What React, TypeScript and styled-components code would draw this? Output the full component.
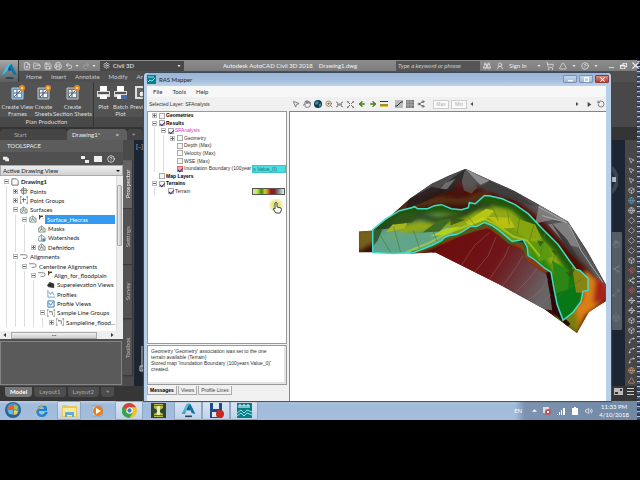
import React from "react";
import styled, { createGlobalStyle, css } from "styled-components";
import {
  Binoculars, CircleHelp, FilePlus, FolderOpen, Save, Printer, Undo2, Redo2, Settings, ShoppingCart,
  MousePointer2, Hand, Globe, ZoomIn, Maximize2, ArrowLeft, ArrowRight, RotateCcw, Volume2,
  UserRound, Triangle, Share2, Magnet, Waypoints, Diamond, Spline, Box as BoxIcon,
} from "lucide-react";

const Global = createGlobalStyle`
  * { box-sizing: border-box; }
  body { margin: 0; background: #000; }
  button, input, select, textarea { font: inherit; color: inherit; margin: 0; padding: 0; border: 0; border-radius: 0; background: none; }
  ul { list-style: none; margin: 0; padding: 0; }
  a { color: inherit; text-decoration: none; }
  svg { display: block; flex: none; }
`;

const ui = 'Lato, "Open Sans", sans-serif';
const classic = '"Liberation Sans", Arial, sans-serif';

const Screen = styled.div`
  height: 100vh; padding: 60px 0; display: flex;
  font: 6px/8px ${ui}; color: #ddd; overflow: hidden; white-space: nowrap;
`;
const Session = styled.div`flex: 1; min-width: 0; display: flex; flex-direction: column;`;
const Desktop = styled.div`position: relative; flex: 1; min-height: 0; display: flex;`;
const Cad = styled.main`flex: 1; min-width: 0; display: flex; flex-direction: column; background: #1c2531;`;
const CadHead = styled.header`display: flex; background: #494949;`;
const AppButton = styled.button`
  width: 19px; height: 22px; background: linear-gradient(#a8a8a8, #5d5d5d); border-right: 1px solid #333;
  display: grid; place-items: center;
`;
const HeadRows = styled.div`flex: 1; min-width: 0;`;
const TitleBar = styled.div`
  height: 11px; display: flex; align-items: center; background: linear-gradient(#8c8c8c, #7d7d7d); color: #eee;
`;
const QuickBar = styled.div`
  width: 81px; height: 11px; display: flex; align-items: center; justify-content: space-between; padding: 0 4px;
`;
const IconButton = styled.button`display: grid; place-items: center; color: inherit;`;
const Workspace = styled.button`
  width: 84px; height: 10px; display: flex; align-items: center; gap: 3px; padding: 0 3px; background: #484848;
  span { flex: 1; text-align: left; }
`;
const DocTitle = styled.div`flex: 1; text-align: center; color: #f4f4f4;`;
const Search = styled.input`
  width: 84px; height: 10px; padding: 0 2px; background: #555; font-style: italic;
  &::placeholder { color: #ccc; opacity: 1; }
`;
const HeadTools = styled.div`width: 157px; display: flex; align-items: center; gap: 5px; padding: 0 3px;`;
const Grow = styled.span`flex: 1;`;
const MenuRow = styled.nav`height: 11px; display: flex; align-items: center; gap: 9px; padding-left: 7px; color: #ccc; background: #505050;`;
const Ribbon = styled.section`height: 46px; display: flex; background: #484848; border-bottom: 1px solid #333;`;
const RibbonGroup = styled.div`display: flex; flex-direction: column; border-right: 1px solid #343434; background: #535353;`;
const RibbonTools = styled.div`flex: 1; display: flex; align-items: flex-start; padding: 3px 2px 0;`;
const GroupName = styled.div`height: 11px; line-height: 9px; text-align: center; background: #484848; color: #ddd;`;
const BigButton = styled.button<{ $w: number }>`
  width: ${p => p.$w}px; display: flex; flex-direction: column; align-items: center; gap: 3px;
  line-height: 7px; text-align: center; color: #ddd; white-space: pre;
`;
const FileTabs = styled.div`height: 12px; display: flex; align-items: flex-end; background: #343434;`;
const FileTab = styled.button<{ $w: number; $on?: boolean; $inset?: number }>`
  width: ${p => p.$w}px; height: 11px; display: flex; align-items: center; justify-content: space-between; padding: 0 8px 0 ${p => p.$inset ?? 5}px;
  background: ${p => (p.$on ? "#606060" : "#454545")}; color: ${p => (p.$on ? "#eee" : "#aaa")};
  border-radius: 4px 4px 0 0;
`;
const Work = styled.div`flex: 1; min-height: 0; display: flex;`;
const Palette = styled.aside`width: 134px; display: flex; background: #505050;`;
const PaletteMain = styled.div`width: 123px; display: flex; flex-direction: column;`;
const PaletteTitle = styled.div`height: 12px; line-height: 12px; padding-left: 7px; color: #eee; background: #5c5c5c;`;
const PaletteTools = styled.div`height: 13px; display: flex; align-items: center; gap: 5px; padding: 0 3px;`;
const ViewSelect = styled.select`
  height: 11px; appearance: none; padding: 0 2px; background: linear-gradient(#eee, #d2d2d2); color: #222; border: 1px solid #aaa;
`;
const SelectWrap = styled.div`
  position: relative; display: grid;
  &::after { content: ""; position: absolute; right: 3px; top: 5px; border: 2px solid transparent; border-top-color: #111; }
`;
const TreeFrame = styled.div`height: 155px; background: #fff; display: flex; color: #222;`;
const CadTree = styled.ul`width: 116px; padding: 1px 1px 4px 0; display: grid; grid-auto-rows: 1fr;`;
const CadItem = styled.li<{ $d: number; $bold?: boolean; $on?: boolean }>`
  display: flex; align-items: center; gap: 2px; padding-left: ${p => p.$d * 9 + 4}px; min-height: 0;
  background: repeating-linear-gradient(90deg, transparent 0 6px, #ddd 6px 7px, transparent 7px 9px) 0 0 / ${p => p.$d * 9}px 100% no-repeat;
  font-weight: ${p => (p.$bold ? 700 : 400)};
  span { flex: ${p => (p.$on ? 1 : "none")}; line-height: 9px; ${p => p.$on && css`background: #3399f3; color: #fff; padding-left: 2px;`} }
`;
const Expander = styled.button<{ $hide?: boolean }>`
  width: 5px; height: 5px; border: ${p => (p.$hide ? 0 : 1)}px solid #bbb; flex: none; color: #444; display: grid; place-items: center;
`;
const VBar = styled.div`
  width: 7px; background: #eee; padding: 9px 1px 85px 0; display: flex; border-left: 1px solid #ddd;
  i { flex: 1; background: linear-gradient(90deg, #eee, #c5c5c5); border: 1px solid #aaa; border-radius: 1px; }
`;
const HBar = styled.div`
  height: 8px; background: #eee; display: flex; align-items: center; justify-content: space-between; padding: 0 9px 0 3px; color: #333;
  i { width: 86px; height: 7px; margin-right: 9px; background: linear-gradient(#f1f1f1, #ccc); border: 1px solid #aaa; font-style: normal; line-height: 4px; text-align: center; }
`;
const Details = styled.div`flex: 1; margin: 2px 1px 1px 0; border: 1px solid #858585; background: #5a5a5a;`;
const SideTabs = styled.div`flex: 1; padding: 20px 1px 10px 0; display: grid; grid-template-rows: 49fr 56fr 54fr 56fr; background: #4a4a4a;`;
const SideTab = styled.button<{ $on?: boolean }>`
  writing-mode: vertical-rl; transform: rotate(180deg); background: ${p => (p.$on ? "#636363" : "#525252")};
  color: ${p => (p.$on ? "#eee" : "#bbb")}; border-top: 1px solid #333; border-left: 1px solid #333; line-height: 8px; text-align: center;
`;
const LayoutTabs = styled.div`height: 15px; display: flex; align-items: flex-start; padding: 1px 3px 0 5px; gap: 2px; background: #363636;`;
const LayoutTab = styled.button<{ $on?: boolean }>`
  height: 10px; padding: 0 5px; border-radius: 0 0 4px 4px; background: ${p => (p.$on ? "#777" : "#4d4d4d")};
  color: ${p => (p.$on ? "#fff" : "#aaa")}; font-weight: ${p => (p.$on ? 700 : 400)};
`;
const Viewport = styled.div`flex: 1; display: flex; min-width: 0;`;
const Model = styled.div`
  flex: 1; min-width: 0; display: flex; flex-direction: column; justify-content: space-between; padding: 3px 2px 14px; color: #ccc;
`;
const NavColumn = styled.div`width: 15px; padding: 26px 1px 56px 0; display: flex; flex-direction: column; justify-content: space-between;`;
const NavBar = styled.div`
  height: 98px; width: 12px; background: #565d65; border-radius: 1px; color: #79818a;
  display: flex; flex-direction: column; align-items: center; justify-content: space-around;
`;
const ToolColumn = styled.div`
  width: 12px; background: #474747; color: #d5d5d5; display: flex; flex-direction: column; align-items: center; justify-content: space-between; padding: 17px 0 2px;
`;
const Noise = styled.div`
  width: 3px; background: repeating-linear-gradient(#333d59 0 1px, #b8c2d8 1px 2px, #46557c 2px 4px, #28334c 4px 5px);
`;

const Window = styled.section`
  position: absolute; left: 144px; right: 26px; top: 13px; bottom: 0; display: flex; flex-direction: column;
  background: #f0f0f0; border: solid #b7cfe9; border-width: 0 5px 0 3px; border-radius: 3px 3px 0 0; color: #333;
  font: 5px/7px ${classic}; box-shadow: 0 0 1px 1px #3c4c5d;
`;
const WinTitle = styled.header`
  height: 13px; display: flex; align-items: center; gap: 3px; background: linear-gradient(#9ab5d6, #a4bddc 50%, #bdd2ea);
  margin: 0 -3px 0 -1px; padding-left: 1px; border-radius: 3px 3px 0 0; font: 6px/8px ${ui}; color: #222;
`;
const WinButtons = styled.div`display: flex; gap: 2px; align-self: flex-start; margin-top: 2px;`;
const WinButton = styled.button<{ $close?: boolean }>`
  width: 14px; height: 8px; border: 1px solid ${p => (p.$close ? "#873c35" : "#7b93b3")}; border-radius: 1px; display: grid; place-items: center;
  color: #fff; background: ${p => (p.$close ? "linear-gradient(#dd8c80, #bd3c2b)" : "linear-gradient(#c4d6eb, #9fb9d8)")};
`;
const WinMenu = styled.nav`height: 11px; display: flex; align-items: center; gap: 10px; padding: 0 6px; background: #f7f7f7; font: 6px/8px ${ui};`;
const WinTools = styled.div`height: 14px; display: flex; align-items: center;`;
const Selected = styled.div`width: 143px; padding-left: 2px;`;
const MapTools = styled.div`flex: 1; display: flex; align-items: center; color: #4a4a4a;`;
const MapTool = styled.button<{ $c?: string; $gap?: boolean }>`
  width: 11px; height: 10px; margin-left: ${p => (p.$gap ? 4 : 0)}px; display: grid; place-items: center; color: ${p => p.$c || "inherit"};
`;
const RangeButton = styled.button<{ $first?: boolean }>`
  width: 16px; height: 9px; margin-left: ${p => (p.$first ? 7 : 2)}px; border: 1px solid #ccc; background: #fafafa; color: #aaa;
`;
const Track = styled.div`flex: 1; display: flex; justify-content: space-between; padding: 0 5px 0 3px;`;
const WinBody = styled.div`flex: 1; min-height: 0; display: flex; gap: 2px;`;
const Side = styled.div`width: 140px; display: flex; flex-direction: column;`;
const LayerFrame = styled.div`flex: 1; min-height: 0; background: #fff; border: 1px solid #999;`;
const LayerTree = styled.ul`height: 83px; display: grid; grid-auto-rows: 1fr;`;
const LayerItem = styled.li<{ $d: number; $tone?: string }>`
  display: flex; align-items: center; padding-left: ${p => p.$d * 9 + 4}px; gap: 2px; min-height: 0;
  background: repeating-linear-gradient(90deg, transparent 0 6px, #ddd 6px 7px, transparent 7px 9px) 0 0 / ${p => p.$d * 9}px 100% no-repeat;
  font-weight: ${p => (p.$tone === "bold" ? 700 : 400)}; color: ${p => (p.$tone === "pink" ? "#d32ed0" : p.$tone === "bold" ? "#000" : "#333")};
  label { display: flex; align-items: center; gap: 1px; }
  mark { background: #4bdde0; color: #256d76; width: 34px; border: 1px solid #37c6cf; line-height: 6px; margin-right: -4px; }
`;
const Check = styled.input<{ $red?: boolean }>`
  appearance: none; width: 6px; height: 6px; border: 1px solid ${p => (p.$red ? "#dc6666" : "#aaa")}; background: ${p => (p.$red ? "#f3a9a9" : "#f6f6f6")};
  display: grid; place-items: center;
  &:checked::after { content: ""; width: 2px; height: 4px; border: solid #44347c; border-width: 0 1px 1px 0; transform: rotate(45deg); }
`;
const Ramp = styled.i`
  width: 33px; height: 7px; margin: 0 1px 0 auto; border: 1px solid #555;
  background: linear-gradient(90deg, #c7eccb, #c9e82e 14%, #2c8d15 28%, #d4d322 38%, #e0781b 48%, #921512 58%, #8c2224 70%, #777 80%, #eee);
`;
const Messages = styled.textarea`
  height: 40px; margin-top: 1px; padding: 2px 3px; border: 1px solid #999; box-shadow: inset -2px -2px #e4e4e4; background: #fff; line-height: 6px; resize: none; overflow: hidden; color: #333;
`;
const MessageTabs = styled.div`height: 16px; display: flex; padding-top: 1px; gap: 1px;`;
const MessageTab = styled.button<{ $on?: boolean }>`
  height: 9px; padding: 0 2px; border: 1px solid #aaa; border-top: 0; font-weight: ${p => (p.$on ? 700 : 400)}; color: ${p => (p.$on ? "#000" : "#444")};
`;
const MapPane = styled.div`
  flex: 1; min-width: 0; background: #fff; border: solid #858585; border-width: 1px 0 0 1px; overflow: hidden;
  svg { width: 100%; height: 100%; }
`;
const Pointer = styled.div`
  position: absolute; left: 121px; top: 126px; width: 18px; height: 18px; color: #333; display: grid; place-items: center;
  background: radial-gradient(circle at 8px 6px, #d8d655 0, #e9e88a 4px, transparent 8px);
`;

const Taskbar = styled.footer`height: 19px; display: flex; background: linear-gradient(#b7cde8, #a0bada 20%, #a5bedc);`;
const Task = styled.button<{ $w: number; $on?: boolean }>`
  width: ${p => p.$w}px; display: grid; place-items: center;
  ${p => p.$on && css`background: linear-gradient(#d9e5f3, #bfd2e8); border: 1px solid #8ea7c4; border-radius: 1px;`}
`;
const Tray = styled.div`
  margin-left: auto; width: 122px; display: flex; align-items: center; justify-content: flex-end; gap: 6px; padding-right: 8px; color: #fff;
  background: linear-gradient(90deg, transparent, #7c92ae 10px, #7189a5);
`;
const Lang = styled.span`margin-right: 4px;`;
const Clock = styled.time`text-align: center; white-space: pre-line;`;

const Glyph = ({ d, size = 7, fill = "currentColor" }: { d: string; size?: number; fill?: string }) => (
  <svg width={size} height={size} viewBox="0 0 8 8"><path d={d} fill={fill} /></svg>
);
const Down = () => <Glyph size={4} d="M1 2h6L4 6z" />;
const ALogo = ({ size = 17 }: { size?: number }) => (
  <svg width={size} height={size} viewBox="0 0 18 18">
    <path d="M1 13 7 1h4l6 12-4-1-1-3H6l-1 4z" fill="#2492bb" /><path d="M7 1h4L6 9l-5 4z" fill="#58b9dc" /><path d="M9 3 7 8h4z" fill="#1b526c" />
    <path d="M11 1l6 12-4-1-4-9z" fill="#1673a0" /><path d="M5 15h8v2H5z" fill="#294556" />
  </svg>
);
const Sheet = ({ tone }: { tone: string }) => (
  <svg width="15" height="15" viewBox="0 0 15 15">
    <path d="M2 3h11v11H2z" fill={tone} stroke="#b9cbd8" /><path d="M4 5h7v7H4z" fill="#eef3f6" />
    <path d="M4 8h7M7 5v7M4 12l7-7" stroke="#4e6178" fill="none" /><circle cx="12" cy="3" r="3" fill="#e58a28" /><circle cx="12" cy="3" r="1" fill="#fff1b8" />
  </svg>
);
const Plotter = ({ blue }: { blue?: boolean }) => (
  <svg width="15" height="15" viewBox="0 0 15 15">
    <path d="M4 1h7v5H4z" fill="#fff" /><path d="M1 6h13v6H1z" fill="#d7d7d7" /><path d="M2 7h11v2H2z" fill="#555" /><path d="M4 10h7v4H4z" fill="#f8f8f8" />
    {blue && <path d="M8 10h6v4H8z" fill="#466da4" />}
  </svg>
);
const Preview = () => (
  <svg width="15" height="15" viewBox="0 0 15 15"><path d="M2 1h11v13H2z" fill="#ddd" /><path d="M4 3h7v9H4z" fill="#666" /><circle cx="9" cy="9" r="3" fill="#eee" stroke="#555" /></svg>
);
const NodeIcon = ({ kind }: { kind: string }) => {
  const shapes: Record<string, React.ReactNode> = {
    doc: <path d="M1 1h5l2 2v5H1z" fill="#fff" stroke="#666" />,
    points: <path d="M4 0v9M0 4h9M2 2h5v5H2z" fill="none" stroke="#777" />,
    group: <path d="M2 1H0v7h2M7 1h2v7H7M4 2v5M2 4h5" fill="none" stroke="#666" />,
    surface: <path d="M0 4 4 1l4 3v4H1zM0 4l4 1 4-1M4 5 1 8M4 5l4 3M4 1v4" fill="#edf4ee" stroke="#8a958e" />,
    water: <><path d="M0 4 4 1l4 3v4H1zM4 1v7" fill="#edf4ee" stroke="#8a958e" /><path d="M5 5h3v3H5z" fill="#4487bd" /></>,
    align: <path d="M0 2h6q2 0 2 2t-2 2H3" fill="none" stroke="#777" />,
    super: <path d="M0 5 3 1l5 2v5l-6-1z" fill="#333" />,
    profile: <path d="M1 0v8h8M2 2l2 3 2-3 2 4" fill="none" stroke="#6d9cc0" />,
    pview: <path d="M1 1h7v7H1zM2 3l2 3 3-4" fill="#e8f3fc" stroke="#3677aa" />,
    sample: <path d="M2 1H0v7h2M7 1h2v7H7M3 3h3v4M3 2v2" fill="none" stroke="#777" />,
  };
  return <svg width="8" height="8" viewBox="0 0 9 9">{shapes[kind]}</svg>;
};
const Flag = () => <svg width="4" height="8" viewBox="0 0 4 8"><path d="M0 0h4v2H2L0 5z" fill="#4a4520" /><path d="M1 0h3v1H1z" fill="#e0b52e" /></svg>;
const cadRows: [string, number, string, string][] = [
  ["Drawing1", 0, "-", "doc"], ["Points", 1, "+", "points"], ["Point Groups", 1, "+", "group"], ["Surfaces", 1, "-", "surface"],
  ["Surface_Hecras", 2, "-", "surface"], ["Masks", 3, "", "surface"], ["Watersheds", 3, "", "water"], ["Definition", 3, "+", "surface"],
  ["Alignments", 1, "-", "align"], ["Centerline Alignments", 2, "-", "align"], ["Align_for_floodplain", 3, "-", "align"],
  ["Superelevation Views", 4, "", "super"], ["Profiles", 4, "", "profile"], ["Profile Views", 4, "", "pview"],
  ["Sample Line Groups", 4, "-", "sample"], ["Sampleline_flood...", 5, "+", "sample"],
];
const flagged = ["Surface_Hecras", "Align_for_floodplain"];
const layers: [string, number, string, boolean, string][] = [
  ["Geometries", 0, "+", false, "bold"], ["Results", 0, "-", true, "bold"], ["SFAnalysis", 1, "-", true, "pink"], ["Geometry", 2, "+", false, ""],
  ["Depth (Max)", 2, "", false, ""], ["Velocity (Max)", 2, "", false, ""], ["WSE (Max)", 2, "", false, ""],
  ["Inundation Boundary (100year", 2, "", true, "red"], ["Map Layers", 0, "", false, "bold"], ["Terrains", 0, "-", true, "bold"], ["Terrain", 1, "", true, ""],
];
const Sign = ({ s }: { s: string }) => (
  <Expander $hide={!s} aria-label={s === "+" ? "Expand" : "Collapse"}>
    {s && <svg width="3" height="3" viewBox="0 0 3 3"><path d={s === "+" ? "M0 1h3v1H0zM1 0h1v3H1z" : "M0 1h3v1H0z"} fill="#666" /></svg>}
  </Expander>
);

const outline = "M359 231 373 230 390 216 410 198 432 183 449 175 466 168 490 179 515 190 540 204 569 221 588 250 607 284V301L590 312 578 333 563 322 545 309 500 284 458 263 436 252 415 253 373 252 359 252Z";
const flood = "M373 252V229L385 219 400 210 412 207 415 206 418 208 428 208 435 205 442 204 452 208 462 209 469 207 470 202 476 203 485 195 490 195 503 198 516 204 529 213 543 228 559 244 571 261 577 269 581 270 589 278V290L584 291 582 301 574 312 564 320 558 304 555 289 552 272 546 268 535 259 529 255 528 247 524 239 513 241 500 230 493 225 485 222 477 226 471 226 463 231 457 234 450 235 445 237 442 240 432 245 414 252 394 253Z";
const Terrain = () => (
  <svg viewBox="290 111 316 290" preserveAspectRatio="xMinYMin meet" role="img" aria-label="Terrain with inundation boundary">
    <defs>
      <clipPath id="land"><path d={outline} /></clipPath>
      <clipPath id="wet"><path d={flood} /></clipPath>
      <filter id="soft"><feGaussianBlur stdDeviation="2" /></filter>
      <linearGradient id="plain" x1="440" y1="240" x2="540" y2="300" gradientUnits="userSpaceOnUse">
        <stop stopColor="#6d0c0d" /><stop offset=".5" stopColor="#6f1518" /><stop offset=".75" stopColor="#6a3a3e" /><stop offset="1" stopColor="#686466" />
      </linearGradient>
      <linearGradient id="valley" x1="373" y1="240" x2="575" y2="290" gradientUnits="userSpaceOnUse">
        <stop stopColor="#58967b" /><stop offset=".24" stopColor="#5f9a5a" /><stop offset=".38" stopColor="#7d9a1c" /><stop offset=".68" stopColor="#6f9a12" /><stop offset=".82" stopColor="#2c8710" /><stop offset="1" stopColor="#127510" />
      </linearGradient>
    </defs>
    <g clipPath="url(#land)">
      <path d={outline} fill="#3b100b" />
      <g filter="url(#soft)">
        <path d="M405 200 430 182 466 166 492 178 540 202 570 219 612 285 608 296 588 272 563 249 543 222 518 203 497 191 476 185 450 190Z" fill="#555" />
        <path d="M400 210 430 196 455 188 480 194 514 200 540 220 574 257 604 289" fill="none" stroke="#540905" strokeWidth="8" />
        <path d="M380 222 410 205 440 200 470 200 490 192" fill="none" stroke="#553216" strokeWidth="7" />
        <path d="M357 229 375 228 378 240 357 252Z" fill="#77611d" />
        <path d="M390 255 415 252 441 241 470 230 490 225 510 241 523 246 530 260 549 272" fill="none" stroke="#b34916" strokeWidth="5" />
        <path d="M586 270 600 282 606 300 586 316 578 334 561 320 582 300Z" fill="#db7e12" />
        <path d="M597 275 608 285V302L594 303Z" fill="#a72416" />
        <path d="M555 316 575 305 580 322 578 334Z" fill="#777f10" />
      </g>
      <path d="M432 252 446 244 456 238 476 231 489 228 500 236 512 246 524 250 528 261 549 275 553 310 545 309Z" fill="url(#plain)" />
      <path d="M549 272 556 311 570 325" fill="none" stroke="#2c0808" strokeWidth="4" />
      <g stroke="#a87575" strokeWidth="1" opacity=".4" fill="none">
        <path d="M462 265 475 245 490 232M475 272 489 255 497 236M490 279 505 257 510 246M503 286 518 265 524 255M516 293 531 277 538 268M529 300 542 290 549 278M540 306 552 294" />
      </g>
      <g opacity=".8">
        <path d="M466 168 460 188 445 193 430 197 439 187Z" fill="#252525" /><path d="M466 168 478 187 472 193 461 188Z" fill="#5c5555" />
        <path d="M466 168 490 180 481 184 475 178Z" fill="#9a9a9a" /><path d="M490 180 520 194 536 206 510 198 482 186Z" fill="#3b3b3b" />
        <path d="M432 183 450 177 440 187 428 196Z" fill="#4c4c4c" /><path d="M446 182 456 178 448 188 434 194Z" fill="#777" />
        <path d="M540 204 569 221 553 219 536 223Z" fill="#888" />
        <path d="M569 221 580 247 567 244 549 224Z" fill="#8a8a8a" /><path d="M569 221 607 284 596 276 580 248Z" fill="#5a5a5a" />
        <path d="M552 222 568 239 580 259 599 279 570 251Z" fill="#373737" />
        <path d="M570 224 582 250 604 282M539 206 568 222 543 215" stroke="#bbb" fill="none" />
        <path d="M410 198 432 186 448 189 428 200 406 208Z" fill="#241b1b" />
        <path d="M455 182 462 179 466 196 456 198Z" fill="#4b1414" />
      </g>
      <g clipPath="url(#wet)">
        <path d={flood} fill="url(#valley)" />
        <path d="M373 229 400 210 441 205 469 208 485 196 516 204 545 230 571 261 589 278" stroke="#20570b" strokeWidth="14" fill="none" filter="url(#soft)" />
        <path d="M386 238 411 226 436 225 463 223 484 211 507 214 526 231 549 252 563 275" stroke="#93a814" strokeWidth="10" fill="none" filter="url(#soft)" />
        <path d="M375 232 401 221 420 215 438 220 461 215 474 207 492 204" stroke="#28401a" strokeWidth="7" fill="none" opacity=".85" filter="url(#soft)" />
        <path d="M373 230 390 228 410 233 437 231 449 225 455 234 432 244 412 252 373 252Z" fill="#62a68f" opacity=".85" />
        <path d="M373 230 383 228 378 240 373 246Z" fill="#355b30" />
        <path d="M386 232 393 224 408 222 405 228Z" fill="#a3b521" /><path d="M423 232 440 219 452 218 440 231Z" fill="#3f6a26" />
        <path d="M430 236 446 228 462 226 446 234Z" fill="#b2d022" />
        <path d="M466 222 476 215 487 208 495 210 486 219 472 225Z" fill="#b5c616" /><path d="M487 216 510 217 516 227 504 228Z" fill="#bbbf10" />
        <path d="M512 216 536 224 543 239 527 237Z" fill="#87a50e" /><path d="M529 240 547 243 554 256 540 261Z" fill="#5a9a10" />
        <path d="M553 260 570 270 569 295 557 293Z" fill="#2b8616" /><path d="M557 293 583 284 576 309 564 319Z" fill="#087718" />
        <path d="M573 266 590 275 590 293 577 292Z" fill="#878414" />
        <path d="M402 214 421 214 412 222 395 224ZM452 217 466 219 451 225ZM538 240 545 241 541 246ZM552 250 560 250 557 255ZM567 272 577 267 571 277Z" fill="#315413" opacity=".8" />
        <path d="M406 252 430 242 445 234 463 227 484 218 497 224 514 236 528 240 541 256" fill="none" stroke="#c4da24" strokeWidth="2" opacity=".6" />
        <path d="M380 234 391 252M394 226 401 252M414 230 420 248M432 226 438 242M468 215 476 225M492 204 499 220M508 208 510 224M521 213 518 233M535 224 530 241M546 232 541 257M558 249 551 268M574 266 558 287M582 279 558 297" stroke="#4b751c" fill="none" opacity=".55" />
      </g>
      <path d="M410 253 432 246 444 240 450 237 463 233 478 228 487 224 496 229 510 242 523 243 529 257" fill="none" stroke="#27701e" strokeWidth="2" />
    </g>
    <path d={flood} fill="none" stroke="#42ddca" strokeWidth="1.5" />
  </svg>
);

export default function App() {
  return (
    <>
      <Global />
      <Screen>
        <Session>
          <Desktop>
            <Cad>
              <CadHead>
                <AppButton aria-label="Application menu"><ALogo /></AppButton>
                <HeadRows>
                  <TitleBar>
                    <QuickBar>
                      {[FilePlus, FolderOpen, Save, Printer, Undo2].map((I, i) => <IconButton key={i} aria-label="Quick access"><I size={8} /></IconButton>)}
                      <Down /><IconButton aria-label="Redo"><Redo2 size={8} color="#aaa" /></IconButton><Down />
                    </QuickBar>
                    <Workspace><Settings size={7} /><span>Civil 3D</span><Down /></Workspace>
                    <DocTitle>Autodesk AutoCAD Civil 3D 2018 &nbsp; &nbsp;Drawing1.dwg</DocTitle>
                    <Search aria-label="Search" placeholder="Type a keyword or phrase" />
                    <HeadTools>
                      <Binoculars size={8} /><UserRound size={8} /><span>Sign In</span><Grow /><Down /><ShoppingCart size={8} /><Triangle size={8} /><Down />
                      <CircleHelp size={8} /><Down /><Grow /><IconButton aria-label="Minimize"><Glyph d="M1 6h6v1H1z" /></IconButton>
                      <IconButton aria-label="Restore"><Glyph d="M3 1h5v5H6v2H0V3h3zM4 3h2v2h1V2H4zM1 5v2h4V5z" /></IconButton>
                      <IconButton aria-label="Close"><Glyph d="M1 0l3 3 3-3 1 1-3 3 3 3-1 1-3-3-3 3-1-1 3-3-3-3z" /></IconButton>
                    </HeadTools>
                  </TitleBar>
                  <MenuRow>{["Home", "Insert", "Annotate", "Modify", "Analyze"].map(t => <a href="#" key={t}>{t}</a>)}</MenuRow>
                </HeadRows>
              </CadHead>
              <Ribbon>
                <RibbonGroup>
                  <RibbonTools>
                    <BigButton $w={31}><Sheet tone="#4b9ed9" />{"Create View\nFrames"}</BigButton>
                    <BigButton $w={21}><Sheet tone="#777" />{"Create\nSheets"}</BigButton>
                    <BigButton $w={37}><Sheet tone="#777" />{"Create\nSection Sheets"}</BigButton>
                  </RibbonTools>
                  <GroupName>Plan Production</GroupName>
                </RibbonGroup>
                <RibbonGroup>
                  <RibbonTools>
                    <BigButton $w={15}><Plotter />Plot</BigButton>
                    <BigButton $w={19}><Plotter blue />{"Batch\nPlot"}</BigButton>
                    <BigButton $w={21}><Preview />Preview</BigButton>
                  </RibbonTools>
                  <GroupName />
                </RibbonGroup>
              </Ribbon>
              <FileTabs>
                <FileTab $w={67} $inset={14}>Start</FileTab>
                <FileTab $w={60} $on>Drawing1*<span>×</span></FileTab>
                <FileTab $w={16} aria-label="New tab">+</FileTab>
              </FileTabs>
              <Work>
                <Palette>
                  <PaletteMain>
                    <PaletteTitle>TOOLSPACE</PaletteTitle>
                    <PaletteTools>
                      <Glyph size={6} fill="#eee" d="M0 1h6v2h2v4H3V5H0z" /><Grow />
                      <Glyph size={8} fill="#eee" d="M0 1h4v3H0zM4 5h4v3H4z" /><Glyph size={8} fill="#eee" d="M0 1h8v6H0z" /><CircleHelp size={8} color="#fff" />
                      <span />
                    </PaletteTools>
                    <SelectWrap><ViewSelect aria-label="View"><option>Active Drawing View</option></ViewSelect></SelectWrap>
                    <TreeFrame>
                      <CadTree>
                        {cadRows.map(([t, d, s, k]) => (
                          <CadItem key={t} $d={d} $bold={t === "Drawing1"} $on={t === "Surface_Hecras"}>
                            <Sign s={s} /><NodeIcon kind={k} />{flagged.includes(t) && <Flag />}<span>{t}</span>
                          </CadItem>
                        ))}
                      </CadTree>
                      <VBar><i /></VBar>
                    </TreeFrame>
                    <HBar><Glyph size={4} d="M6 0v8L1 4z" /><i>···</i><Glyph size={4} d="M2 0v8l5-4z" /></HBar>
                    <Details />
                  </PaletteMain>
                  <SideTabs>{["Prospector", "Settings", "Survey", "Toolbox"].map((t, i) => <SideTab key={t} $on={i === 0}>{t}</SideTab>)}</SideTabs>
                </Palette>
                <Viewport>
                  <Model>
                    <span>[–]</span>
                    <svg width="12" height="26" viewBox="0 0 12 26"><path d="M6 0v24h6M4 20h5v5H4z" fill="none" stroke="#ccc" /></svg>
                  </Model>
                  <NavColumn>
                    <svg width="8" height="28" viewBox="0 0 8 28"><path d="M1 1q12 13 0 26" fill="none" stroke="#3b4651" strokeWidth="4" /><path d="M2 11h4v5H2z" fill="#b4bac0" /></svg>
                    <NavBar><Hand size={8} /><Share2 size={8} /><Maximize2 size={8} /><BoxIcon size={8} /></NavBar>
                  </NavColumn>
                  <ToolColumn>
                    {[MousePointer2, MousePointer2, MousePointer2, BoxIcon, Globe, Globe, Diamond, Diamond, Diamond, Diamond, BoxIcon, Magnet, Share2, Magnet, Waypoints, Waypoints, BoxIcon, BoxIcon, Spline, Spline, Spline, Globe, Triangle].map((I, i) => (
                      <IconButton key={i} aria-label={`Tool ${i + 1}`}><I size={7} color={i === 11 || i === 13 ? "#c66" : i === 4 ? "#6ac" : i > 20 ? "#e0a878" : "#ddd"} /></IconButton>
                    ))}
                  </ToolColumn>
                </Viewport>
              </Work>
              <LayoutTabs>
                <LayoutTab $on>Model</LayoutTab><LayoutTab>Layout1</LayoutTab><LayoutTab>Layout2</LayoutTab><LayoutTab>+</LayoutTab>
                <Grow />
                <svg width="20" height="10" viewBox="0 0 20 10"><path d="M0 1h9v7H0z" fill="#bbb" /><path d="M1 5h3v2H1zM6 2h2v2H6z" fill="#333" /><path d="M13 1h7v1h-7zM13 4h7v1h-7zM13 7h7v1h-7z" fill="#ccc" /></svg>
              </LayoutTabs>
            </Cad>

            <Window>
              <WinTitle>
                <svg width="9" height="9" viewBox="0 0 9 9"><path d="M0 0h9v9H0z" fill="#087f8d" /><path d="M1 2h6M1 7l2-2 2 1 3-3" stroke="#8de7e5" fill="none" /></svg>
                <span>RAS Mapper</span><Grow />
                <WinButtons>
                  <WinButton aria-label="Minimize"><Glyph size={5} d="M0 5h8v2H0z" /></WinButton>
                  <WinButton aria-label="Maximize"><Glyph size={5} d="M0 0h8v8H0zM2 2v4h4V2z" /></WinButton>
                  <WinButton $close aria-label="Close"><Glyph size={5} d="M1 0l3 3 3-3 1 1-3 3 3 3-1 1-3-3-3 3-1-1 3-3-3-3z" /></WinButton>
                </WinButtons>
              </WinTitle>
              <WinMenu><a href="#">File</a><a href="#">Tools</a><a href="#">Help</a></WinMenu>
              <WinTools>
                <Selected>Selected Layer: SFAnalysis</Selected>
                <MapTools>
                  <MapTool aria-label="Select"><MousePointer2 size={8} /></MapTool>
                  <MapTool aria-label="Pan"><Hand size={8} /></MapTool>
                  <MapTool aria-label="Full extent"><svg width="8" height="8" viewBox="0 0 8 8"><circle cx="4" cy="4" r="4" fill="#12395a" /><path d="M2 1l3 1-2 3-2-1zM5 4l2-1v3L5 7z" fill="#3a9a92" /></svg></MapTool>
                  <MapTool aria-label="Zoom in" $c="#7a5a35"><ZoomIn size={8} /></MapTool>
                  <MapTool aria-label="Shrink"><svg width="7" height="7" viewBox="0 0 7 7"><path d="M0 1l2 1M7 1L5 2M0 6l2-1M7 6L5 5M1 3h5M1 4h5" stroke="#777" fill="none" /></svg></MapTool>
                  <MapTool aria-label="Expand"><svg width="7" height="7" viewBox="0 0 7 7"><path d="M0 0l3 3M7 0L4 3M0 7l3-3M7 7L4 4M0 1h2M5 1h2M0 6h2M5 6h2" stroke="#777" fill="none" /></svg></MapTool>
                  <MapTool aria-label="Previous" $c="#4c7a16"><ArrowLeft size={8} strokeWidth={4} /></MapTool>
                  <MapTool aria-label="Next" $c="#4c7a16"><ArrowRight size={8} strokeWidth={4} /></MapTool>
                  <MapTool aria-label="Measure"><svg width="8" height="8" viewBox="0 0 8 8"><path d="M0 1h8v1H0z" fill="#333" /><path d="M0 4h8v3H0z" fill="#d7c642" /><path d="M1 4v2M3 4v2M5 4v2M7 4v2" stroke="#665b16" /></svg></MapTool>
                  <MapTool $gap aria-label="Profile"><svg width="8" height="8" viewBox="0 0 8 8"><path d="M0 0h8v8H0z" fill="#bbb" /><path d="M0 6h2l4-4h2" stroke="#333" fill="none" /></svg></MapTool>
                  <MapTool aria-label="Grid"><svg width="8" height="8" viewBox="0 0 8 8"><path d="M0 0h8v8H0z" fill="#777" /><path d="M0 2h8M0 5h8M2 0v8M5 0v8" stroke="#aaa" /></svg></MapTool>
                  <MapTool aria-label="Particle trace"><Share2 size={8} /></MapTool>
                  <RangeButton $first>Max</RangeButton><RangeButton>Min</RangeButton>
                  <Track><Glyph size={4} d="M6 0v8L1 4z" /><Glyph size={4} d="M2 0v8l5-4z" /></Track>
                  <MapTool aria-label="Play"><Glyph size={5} d="M1 0l6 4-6 4z" /></MapTool>
                  <MapTool aria-label="Replay"><RotateCcw size={8} /></MapTool>
                </MapTools>
              </WinTools>
              <WinBody>
                <Side>
                  <LayerFrame>
                    <LayerTree>
                      {layers.map(([t, d, s, on, tone]) => (
                        <LayerItem key={t} $d={d} $tone={tone}>
                          <Sign s={s} />
                          <label><Check type="checkbox" defaultChecked={on} $red={tone === "red"} />{t}{tone === "red" && <mark>s Value_0)</mark>}</label>
                          {t === "Terrain" && <Ramp />}
                        </LayerItem>
                      ))}
                    </LayerTree>
                  </LayerFrame>
                  <Messages aria-label="Messages" readOnly defaultValue={"Geometry 'Geometry' association was set to the one\nterrain available (Terrain)\nStored map 'Inundation Boundary (100years Value_0)'\ncreated."} />
                  <MessageTabs><MessageTab $on>Messages</MessageTab><MessageTab>Views</MessageTab><MessageTab>Profile Lines</MessageTab></MessageTabs>
                </Side>
                <MapPane><Terrain /></MapPane>
              </WinBody>
              <Pointer>
                <svg width="10" height="12" viewBox="0 0 10 12"><path d="M3 7V1q1-1 2 0v4l4 1q1 1 0 3l-1 2H4L1 7q1-1 2 0z" fill="#fff" stroke="#444" /></svg>
              </Pointer>
            </Window>
          </Desktop>

          <Taskbar>
            <Task $w={26} aria-label="Start">
              <svg width="17" height="17" viewBox="0 0 17 17"><circle cx="8" cy="8" r="8" fill="#286497" /><circle cx="8" cy="7" r="6" fill="#568fb5" /><path d="M4 4l4-1v4H3z" fill="#e7643b" /><path d="M9 3l4 1-1 4-3-1z" fill="#9ac850" /><path d="M3 8h5v4H4z" fill="#62bbe8" /><path d="M9 8l4 1-1 3-3 1z" fill="#f5ce48" /></svg>
            </Task>
            <Task $w={31} aria-label="Internet Explorer">
              <svg width="15" height="15" viewBox="0 0 15 15"><path d="M11 9q-2 4-5 2-2-1-1-3h8q1-6-4-6T2 8q1 6 6 6 4 0 6-5zM5 6q1-2 3-2t2 2z" fill="#2084ce" /><path d="M2 13Q-1 8 6 4q7-4 7-1" fill="none" stroke="#efc344" strokeWidth="1" /></svg>
            </Task>
            <Task $w={24} $on aria-label="Explorer">
              <svg width="15" height="15" viewBox="0 0 15 15"><path d="M0 2h5l1 1h9v11H0z" fill="#e5c95f" /><path d="M1 5h13v8H1z" fill="#f8ea9d" /><path d="M3 9h9v5h-2v-2H5v2H3z" fill="#62abd2" /></svg>
            </Task>
            <Task $w={34} aria-label="Media player">
              <svg width="12" height="12" viewBox="0 0 12 12"><path d="M0 1h10v10H0z" fill="#c6dbed" stroke="#7da3c5" /><circle cx="6" cy="6" r="5" fill="#ec7c20" /><path d="M4 3l5 3-5 3z" fill="#fff" /></svg>
            </Task>
            <Task $w={28} $on aria-label="Chrome">
              <svg width="15" height="15" viewBox="0 0 14 14"><circle cx="7" cy="7" r="7" fill="#e9c52d" /><path d="M1 3a7 7 0 0 1 12 1H7L4 8z" fill="#d94233" /><path d="M1 3a7 7 0 0 0 6 11l3-5H5z" fill="#37a34b" /><circle cx="7" cy="7" r="3" fill="#fff" /><circle cx="7" cy="7" r="2" fill="#377fd0" /></svg>
            </Task>
            <Task $w={31} aria-label="Compress">
              <svg width="15" height="15" viewBox="0 0 15 15"><path d="M0 0h15v15H0z" fill="#30472e" /><path d="M3 1h9v4l-3 2v2l3 2v3H3v-3l3-2V7L3 5z" fill="#b9b84a" /><path d="M6 3h3v10H6z" fill="#e4eac4" /><path d="M3 2h9v1H3zM3 12h9v1H3z" fill="#56743f" /></svg>
            </Task>
            <Task $w={28} $on aria-label="Civil 3D"><ALogo size={15} /></Task>
            <Task $w={28} $on aria-label="HEC-RAS">
              <svg width="15" height="15" viewBox="0 0 15 15"><path d="M1 0h12v15H1z" fill="#24478b" /><path d="M4 0h6v6H4zM3 9h8v5H3z" fill="#dbe7f3" /><circle cx="11" cy="11" r="4" fill="#ca271f" /></svg>
            </Task>
            <Task $w={28} $on aria-label="RAS Mapper">
              <svg width="15" height="15" viewBox="0 0 15 15"><path d="M0 0h15v15H0z" fill="#087f88" /><path d="M2 5V2h2v3M6 5V2h2v3M10 5V2h2v3" stroke="#fff" fill="none" /><path d="M0 10l4-3 3 3 3-3 5 2M0 13l4-3 3 3 3-3 5 2" stroke="#9de7e2" fill="none" /></svg>
            </Task>
            <Tray>
              <Lang>EN</Lang><Glyph size={5} d="M0 6l4-4 4 4z" />
              <svg width="8" height="8" viewBox="0 0 8 8"><path d="M0 0h6v6H0z" fill="#ddd" /><circle cx="5" cy="5" r="3" fill="#c4505a" /><path d="M4 4l2 2M6 4L4 6" stroke="#fff" /></svg>
              <Glyph size={8} d="M0 7h1v1H0zM2 5h1v3H2zM4 3h1v5H4zM6 1h2v7H6z" />
              <Glyph size={8} d="M1 1h2V0h2v1h2v7H1z" /><Volume2 size={8} />
              <Clock>{"11:33 PM\n4/10/2018"}</Clock>
            </Tray>
          </Taskbar>
        </Session>
        <Noise />
      </Screen>
    </>
  );
}
